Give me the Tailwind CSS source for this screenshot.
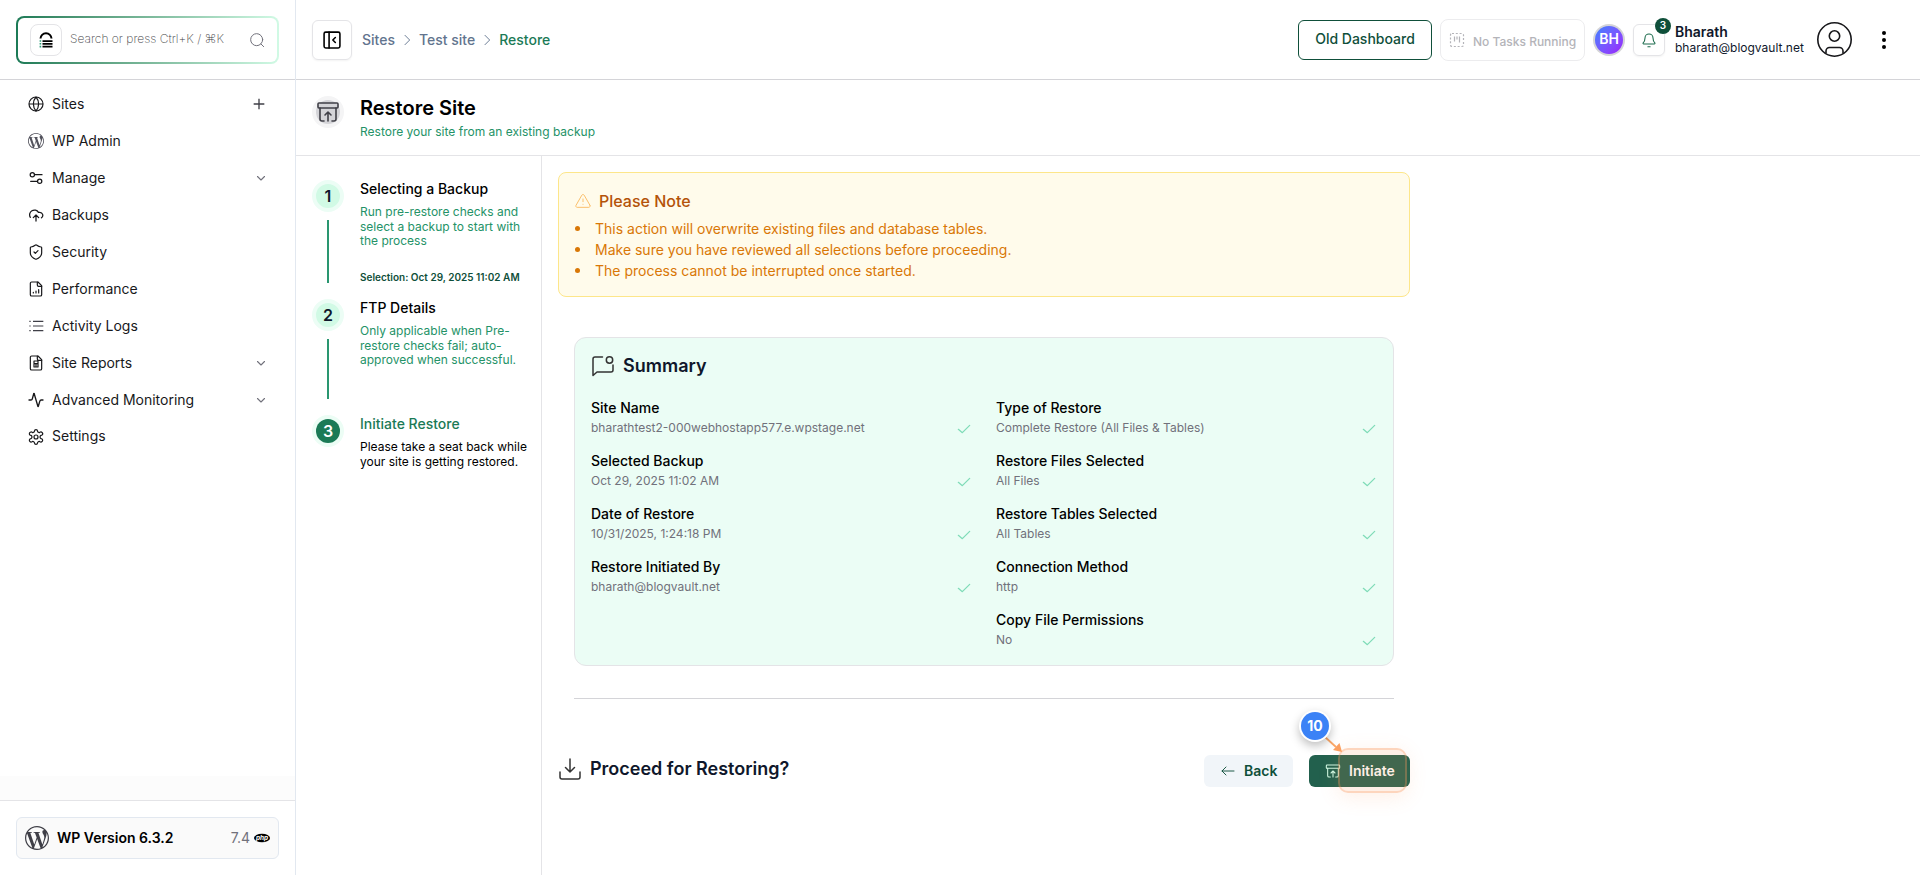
<!DOCTYPE html>
<html lang="en">
<head>
<meta charset="utf-8">
<title>Restore Site</title>
<script src="https://cdn.jsdelivr.net/npm/@tailwindcss/browser@4"></script>
</head>
<body class="bg-white">
<svg class="hidden">
  <defs>
    <symbol id="check" viewBox="0 0 24 24"><path d="M20.500 6.500 9.500 17.500l-6-5" fill="none" stroke="currentColor" stroke-width="1.900" stroke-linecap="round" stroke-linejoin="round"/></symbol>
    <symbol id="down" viewBox="0 0 24 24"><path d="m5 9 7 7 7-7" fill="none" stroke="currentColor" stroke-width="2.200" stroke-linecap="round" stroke-linejoin="round"/></symbol>
    <symbol id="right" viewBox="0 0 24 24"><path d="m9 19 7-7-7-7" fill="none" stroke="currentColor" stroke-width="1.400" stroke-linecap="round" stroke-linejoin="round"/></symbol>
    <symbol id="archive" viewBox="0 0 24 24"><g fill="none" stroke="currentColor" stroke-width="1.6" stroke-linecap="round" stroke-linejoin="round"><rect width="20" height="5" x="2" y="3" rx="1"/><path d="M4 8v11a2 2 0 0 0 2 2h2M20 8v11a2 2 0 0 1-2 2h-2M9 15l3-3 3 3M12 12v9"/></g></symbol>
    <symbol id="wp" viewBox="0 0 24 24"><path fill="currentColor" d="M21.469 6.825c.84 1.537 1.318 3.3 1.318 5.175 0 3.979-2.156 7.456-5.363 9.325l3.295-9.527c.615-1.54.82-2.771.82-3.864 0-.405-.026-.78-.07-1.11m-7.981.105c.647-.03 1.232-.105 1.232-.105.582-.075.514-.93-.067-.899 0 0-1.755.135-2.88.135-1.064 0-2.85-.15-2.85-.15-.585-.03-.661.855-.075.885 0 0 .54.061 1.125.09l1.68 4.605-2.37 7.08L5.354 6.9c.649-.03 1.234-.1 1.234-.1.585-.075.516-.93-.065-.896 0 0-1.746.138-2.874.138-.2 0-.438-.008-.69-.015C4.911 3.15 8.235 1.215 12 1.215c2.809 0 5.365 1.072 7.286 2.833-.046-.003-.091-.009-.141-.009-1.06 0-1.812.923-1.812 1.914 0 .89.513 1.643 1.06 2.531.411.72.89 1.643.89 2.977 0 .915-.354 1.994-.821 3.479l-1.075 3.585-3.9-11.61.001.014zM12 22.784c-1.059 0-2.081-.153-3.048-.437l3.237-9.406 3.315 9.087c.024.053.05.101.078.149-1.12.393-2.325.609-3.582.609M1.211 12c0-1.564.336-3.05.935-4.39L7.29 21.709C3.694 19.96 1.212 16.271 1.211 12M12 0C5.385 0 0 5.385 0 12s5.385 12 12 12 12-5.385 12-12S18.615 0 12 0"/></symbol>
  </defs>
</svg>
<div class="flex h-[875px] w-[1920px] overflow-hidden font-['Inter',sans-serif] text-black">

  <!-- Sidebar -->
  <aside class="flex w-[296px] shrink-0 flex-col border-r border-slate-200">
    <div class="flex h-20 shrink-0 items-center border-b border-zinc-300 pl-4">
      <div class="h-12 w-[263px] rounded-lg bg-linear-to-r from-[#1b7a56] to-[#d1fae5] p-0.5">
        <div class="flex h-full items-center rounded-md bg-white pl-3 pr-3">
          <div class="flex size-8 items-center justify-center rounded-lg border border-zinc-200">
            <svg class="size-4" viewBox="0 0 16 16"><path d="M2.5 6.600a5.500 5.300 0 0 1 11 0" fill="none" stroke="#000" stroke-width="2"/><path d="M4.500 8.200h10v1.800h-10zM4.500 11h10v1.800h-10zM4.500 13.800h10v1.800h-10z"/><path d="M1.600 8.200h1.600v1.600H1.600zM1.600 11h1.600v1.600H1.600zM1.600 13.800h1.600v1.600H1.600z" fill="#2a9d78"/></svg>
          </div>
          <span class="-mt-0.5 ml-2 flex-1 whitespace-nowrap text-xs font-extralight text-zinc-700">Search or press Ctrl+K / ⌘K</span>
          <svg class="size-4 text-zinc-500" viewBox="0 0 24 24" fill="none" stroke="currentColor" stroke-width="1.500" stroke-linecap="round"><circle cx="11.500" cy="11.500" r="9"/><path d="m22 22-4-4"/></svg>
        </div>
      </div>
    </div>
    <nav class="flex flex-1 flex-col pl-7 pr-7 pt-[5px] text-sm text-zinc-900">
      <a class="flex h-[37px] items-center gap-2"><svg class="size-4" viewBox="0 0 24 24" fill="none" stroke="currentColor" stroke-width="1.8"><circle cx="12" cy="12" r="10.5"/><path d="M12 1.500a16 16 0 0 0 0 21 16 16 0 0 0 0-21M1.500 12h21"/></svg><span class="flex-1">Sites</span><svg class="size-4 text-zinc-700" viewBox="0 0 24 24" fill="none" stroke="currentColor" stroke-width="2"><path d="M4 12h16M12 4v16"/></svg></a>
      <a class="flex h-[37px] items-center gap-2"><svg class="size-4 text-zinc-600"><use href="#wp"/></svg><span class="flex-1">WP Admin</span></a>
      <a class="flex h-[37px] items-center gap-2"><svg class="size-4" viewBox="0 0 24 24" fill="none" stroke="currentColor" stroke-width="1.9" stroke-linecap="round"><path d="M21 7H10M14 17H4"/><circle cx="17.500" cy="17" r="3.200"/><circle cx="6.500" cy="7" r="3.200"/></svg><span class="flex-1">Manage</span><svg class="size-3 text-zinc-500"><use href="#down"/></svg></a>
      <a class="flex h-[37px] items-center gap-2"><svg class="size-4" viewBox="0 0 24 24" fill="none" stroke="currentColor" stroke-width="1.900" stroke-linecap="round" stroke-linejoin="round"><path d="M3.500 15.500A7 7 0 1 1 15.700 8h1.800a4.500 4.500 0 0 1 2.700 8.200M12 12v9M8 16l4-4 4 4"/></svg><span class="flex-1">Backups</span></a>
      <a class="flex h-[37px] items-center gap-2"><svg class="size-4" viewBox="0 0 24 24" fill="none" stroke="currentColor" stroke-width="1.800" stroke-linecap="round" stroke-linejoin="round"><path d="M20.500 13c0 5.500-3.500 8-8.200 9.800a1 1 0 0 1-.7 0C7 21 3.500 18.500 3.500 13V5.500a1 1 0 0 1 1-1c2.200 0 4.800-1.300 6.700-2.900a1.200 1.200 0 0 1 1.600 0c1.900 1.600 4.500 2.900 6.700 2.900a1 1 0 0 1 1 1z"/><path d="m9 12 2 2 4-4"/></svg><span class="flex-1">Security</span></a>
      <a class="flex h-[37px] items-center gap-2"><svg class="size-4" viewBox="0 0 24 24" fill="none" stroke="currentColor" stroke-width="1.800" stroke-linecap="round" stroke-linejoin="round"><path d="M15 1.500H5.500a2 2 0 0 0-2 2v17a2 2 0 0 0 2 2h13a2 2 0 0 0 2-2V7z"/><path d="M14 1.500V6a2 2 0 0 0 2 2h4.500M8 18v-1M12 18v-3M16 18v-5"/></svg><span class="flex-1">Performance</span></a>
      <a class="flex h-[37px] items-center gap-2"><svg class="size-4 text-zinc-700" viewBox="0 0 24 24" fill="none" stroke="currentColor" stroke-width="1.800"><path d="M7.500 5H23M7.500 12H23M7.500 19H23M2 5h2M2 12h2M2 19h2"/></svg><span class="flex-1">Activity Logs</span></a>
      <a class="flex h-[37px] items-center gap-2"><svg class="size-4" viewBox="0 0 24 24" fill="none" stroke="currentColor" stroke-width="1.800" stroke-linecap="round" stroke-linejoin="round"><path d="M15 1.500H5.500a2 2 0 0 0-2 2v17a2 2 0 0 0 2 2h13a2 2 0 0 0 2-2V7z"/><path d="M14 1.500V6a2 2 0 0 0 2 2h4.500M9 13v5h6v-5zM9 9.500v3M15 9v4M9 9h5M12 13v5"/></svg><span class="flex-1">Site Reports</span><svg class="size-3 text-zinc-500"><use href="#down"/></svg></a>
      <a class="flex h-[37px] items-center gap-2"><svg class="size-4" viewBox="0 0 24 24" fill="none" stroke="currentColor" stroke-width="2" stroke-linecap="round" stroke-linejoin="round"><path d="M22.500 12h-2.800a2 2 0 0 0-1.900 1.500l-2.400 8.300a.25.25 0 0 1-.5 0L9.200 2.200a.25.25 0 0 0-.5 0l-2.300 8.300A2 2 0 0 1 4.500 12H1.500"/></svg><span class="flex-1">Advanced Monitoring</span><svg class="size-3 text-zinc-500"><use href="#down"/></svg></a>
      <a class="flex h-[37px] items-center gap-2"><svg class="size-4" viewBox="0 0 24 24" fill="none" stroke="currentColor" stroke-width="1.800" stroke-linejoin="round"><path d="M9.670 3.140a2.340 2.340 0 0 1 4.660 0 2.340 2.340 0 0 0 3.320 1.910 2.340 2.340 0 0 1 3.330 4.040 2.340 2.340 0 0 0 0 5.830 2.340 2.340 0 0 1-3.330 4.030 2.340 2.340 0 0 0-3.320 1.920 2.340 2.340 0 0 1-4.660 0 2.340 2.340 0 0 0-3.320-1.920 2.340 2.340 0 0 1-3.330-4.030 2.340 2.340 0 0 0 0-5.830A2.340 2.340 0 0 1 6.350 5.050a2.340 2.340 0 0 0 3.320-1.910"/><circle cx="12" cy="12" r="3"/></svg><span class="-mt-px flex-1">Settings</span></a>
    </nav>
    <div class="h-6 shrink-0 bg-[#fcfcfc]"></div>
    <div class="h-[75px] shrink-0 border-t border-zinc-200 pl-4 pt-4">
      <div class="flex h-[42px] w-[263px] items-center rounded-md border border-slate-200 bg-zinc-50 pl-2 pr-2">
        <svg class="size-6 text-zinc-700"><use href="#wp"/></svg>
        <span class="ml-2 flex-1 text-sm font-semibold">WP Version 6.3.2</span>
        <span class="text-sm text-zinc-500">7.4</span>
        <svg class="ml-1 h-4 w-4" viewBox="0 0 16 16"><ellipse cx="8" cy="8" rx="8" ry="4.300"/><text x="8" y="9.800" text-anchor="middle" font-size="6.500" font-weight="700" font-style="italic" fill="#fff">php</text></svg>
      </div>
    </div>
  </aside>

  <div class="flex flex-1 flex-col">
    <!-- Top bar -->
    <header class="flex h-20 shrink-0 items-center border-b border-zinc-300 pl-4 pr-[30px]">
      <div class="flex size-10 items-center justify-center rounded-md border border-zinc-200 shadow-xs">
        <svg class="size-5" viewBox="0 0 24 24" fill="none" stroke="currentColor" stroke-width="1.900" stroke-linecap="round" stroke-linejoin="round"><rect width="19" height="19" x="2.500" y="2.500" rx="2"/><path d="M8.500 2.500v19M16 15l-3-3 3-3"/></svg>
      </div>
      <div class="ml-2.5 flex items-center text-sm font-medium text-slate-500">
        <span>Sites</span><svg class="mx-1 size-4"><use href="#right"/></svg><span>Test site</span><svg class="mx-1 size-4"><use href="#right"/></svg><span class="text-[#1b7a56]">Restore</span>
      </div>
      <div class="ml-auto flex items-center">
        <div class="flex h-10 w-[134px] items-center justify-center rounded-md border border-[#0f4f3a] pb-0.5 text-sm font-medium text-[#0f4f3a]">Old Dashboard</div>
        <div class="ml-2 flex h-[42px] w-[145px] items-center rounded-lg border border-zinc-200/70 pl-2 text-[#b4b4b9]">
          <svg class="size-4 shrink-0" viewBox="0 0 16 16" fill="none" stroke="currentColor" stroke-width="1.200"><rect x="1.500" y="1.500" width="13" height="13" rx="1.500" stroke-dasharray="2 1.800"/><path d="M5.500 4.500v5M8 4.500v3M10.500 4.500v6"/></svg>
          <span class="ml-2 mt-1 whitespace-nowrap text-xs font-medium">No Tasks Running</span>
        </div>
        <div class="ml-2 flex size-8 items-center justify-center rounded-full bg-zinc-300 p-0.5"><div class="flex size-7 items-center justify-center rounded-full bg-linear-to-br from-blue-500 to-purple-600 pb-0.5 text-sm font-semibold text-white">BH</div></div>
        <div class="relative ml-2 flex size-8 items-center justify-center rounded-md border border-zinc-200 shadow-xs">
          <svg class="size-4 text-[#1b6b4c]" viewBox="0 0 24 24" fill="none" stroke="currentColor" stroke-width="1.600" stroke-linecap="round" stroke-linejoin="round"><path d="M10.300 22h3.400M3.300 16.300A1 1 0 0 0 4 18h16a1 1 0 0 0 .7-1.700C19.400 15 18 13.500 18 9A6 6 0 0 0 6 9c0 4.500-1.400 6-2.700 7.300"/></svg>
          <span class="absolute -right-[7px] -top-[7px] flex size-4 items-center justify-center rounded-full bg-[#0f4f3a] text-[10px] font-semibold text-white">3</span>
        </div>
        <div class="ml-2.5 w-[130px] text-slate-900">
          <div class="text-sm/[16px] font-semibold">Bharath</div>
          <div class="text-xs/[16px]">bharath@blogvault.net</div>
        </div>
        <svg class="ml-3 size-[35px]" viewBox="0 0 35 35" fill="none" stroke="#18181b" stroke-width="1.600"><circle cx="17.500" cy="17.500" r="16.700"/><circle cx="17.500" cy="14" r="5.200"/><path d="M9 31.500V29a3.500 3.500 0 0 1 3.500-3.500h10A3.500 3.500 0 0 1 26 29v2.500"/></svg>
        <svg class="ml-[26px] h-5 w-3" viewBox="0 0 12 20"><circle cx="6" cy="3" r="2"/><circle cx="6" cy="10" r="2"/><circle cx="6" cy="17" r="2"/></svg>
      </div>
    </header>

    <!-- Page heading -->
    <section class="flex h-[76px] shrink-0 border-b border-zinc-200 pl-4 pt-4">
      <div class="flex size-8 items-center justify-center rounded-full bg-zinc-100"><div class="flex size-6 items-center justify-center rounded-full bg-zinc-300"><svg class="size-6 shrink-0 text-zinc-700"><use href="#archive"/></svg></div></div>
      <div class="ml-4 -mt-0.5">
        <h1 class="text-xl/[28px] font-semibold">Restore Site</h1>
        <p class="mt-0.5 text-xs/[16px] text-[#249267]">Restore your site from an existing backup</p>
      </div>
    </section>

    <div class="flex flex-1">
      <!-- Steps -->
      <section class="w-[246px] shrink-0 border-r border-zinc-200 pl-4 pt-6">
        <div class="flex h-[119px] gap-4">
          <div class="flex flex-col items-center">
            <div class="flex size-8 items-center justify-center rounded-full border-4 border-emerald-50 bg-[#d1fae5] text-base font-semibold text-slate-900">1</div>
            <div class="mt-2 h-[63px] w-0.5 bg-[#2a9670]"></div>
          </div>
          <div class="w-[172px] text-xs/[14.5px] text-[#249267]">
            <div class="text-sm/[17px] font-medium text-black">Selecting a Backup</div>
            <p class="mt-2">Run pre-restore checks and<br>select a backup to start with<br>the process</p>
            <p class="mt-[21px] whitespace-nowrap text-[10px] font-semibold text-[#0f4f3a]">Selection: Oct 29, 2025 11:02 AM</p>
          </div>
        </div>
        <div class="flex h-[116px] gap-4">
          <div class="flex flex-col items-center">
            <div class="flex size-8 items-center justify-center rounded-full border-4 border-emerald-50 bg-[#d1fae5] text-base font-semibold text-slate-900">2</div>
            <div class="mt-2 h-[60px] w-0.5 bg-[#2a9670]"></div>
          </div>
          <div class="w-[172px] text-xs/[14.5px] text-[#249267]">
            <div class="text-sm/[17px] font-medium text-black">FTP Details</div>
            <p class="mt-2">Only applicable when Pre-<br>restore checks fail; auto-<br>approved when successful.</p>
          </div>
        </div>
        <div class="flex gap-4">
          <div class="flex size-8 items-center justify-center rounded-full bg-emerald-50"><div class="flex size-6 items-center justify-center rounded-full bg-[#1b7a56] text-base font-semibold text-white">3</div></div>
          <div class="w-[172px] text-xs/[14.5px]">
            <div class="text-sm/[17px] font-medium text-[#1b7a56]">Initiate Restore</div>
            <p class="mt-2 whitespace-nowrap">Please take a seat back while<br>your site is getting restored.</p>
          </div>
        </div>
      </section>

      <!-- Review -->
      <main class="w-[868px] pl-4 pt-4">
        <div class="h-[125px] rounded-lg border border-[#fde68a] bg-[#fffbeb] px-4 pt-4">
          <div class="flex h-6 items-center gap-2">
            <svg class="size-4 text-[#fbbf6b]" viewBox="0 0 24 24" fill="none" stroke="currentColor" stroke-width="1.500" stroke-linecap="round" stroke-linejoin="round"><path d="m22.500 18.500-8.800-15.300a2 2 0 0 0-3.400 0L1.500 18.500A2 2 0 0 0 3.200 21.500h17.600a2 2 0 0 0 1.700-3M12 9v4M12 17h.01"/></svg>
            <h2 class="text-base font-medium text-[#b45309]">Please Note</h2>
          </div>
          <ul class="mt-[5px] text-sm/[21px] text-[#d97706]">
            <li class="flex items-center gap-[15px]"><i class="size-[5px] rounded-full bg-[#d97706]"></i>This action will overwrite existing files and database tables.</li>
            <li class="flex items-center gap-[15px]"><i class="size-[5px] rounded-full bg-[#d97706]"></i>Make sure you have reviewed all selections before proceeding.</li>
            <li class="flex items-center gap-[15px]"><i class="size-[5px] rounded-full bg-[#d97706]"></i>The process cannot be interrupted once started.</li>
          </ul>
        </div>

        <div class="mx-4 mt-10 h-[329px] rounded-xl border border-zinc-200 bg-[#ebfdf5] px-4 pt-4">
          <div class="flex h-6 items-center gap-2">
            <svg class="size-6" viewBox="0 0 24 24" fill="none" stroke="#333" stroke-width="1.500" stroke-linecap="round" stroke-linejoin="round"><path d="M11.500 3H4a2 2 0 0 0-2 2v16.500L6 18h14a2 2 0 0 0 2-2v-5"/><circle cx="18.500" cy="6" r="3.200"/></svg>
            <h2 class="text-lg font-semibold text-slate-900">Summary</h2>
          </div>
          <div class="mt-5 grid grid-cols-2 gap-x-6 text-sm/[20px]">
            <div>
              <div class="flex h-[53px] items-start"><div class="flex-1"><div class="font-medium">Site Name</div><div class="text-xs/[20px] text-zinc-500">bharathtest2-000webhostapp577.e.wpstage.net</div></div><svg class="mt-[22.5px] size-4 text-[#7fdcb8]"><use href="#check"/></svg></div>
              <div class="flex h-[53px] items-start"><div class="flex-1"><div class="font-medium">Selected Backup</div><div class="text-xs/[20px] text-zinc-500">Oct 29, 2025 11:02 AM</div></div><svg class="mt-[22.5px] size-4 text-[#7fdcb8]"><use href="#check"/></svg></div>
              <div class="flex h-[53px] items-start"><div class="flex-1"><div class="font-medium">Date of Restore</div><div class="text-xs/[20px] text-zinc-500">10/31/2025, 1:24:18 PM</div></div><svg class="mt-[22.5px] size-4 text-[#7fdcb8]"><use href="#check"/></svg></div>
              <div class="flex h-[53px] items-start"><div class="flex-1"><div class="font-medium">Restore Initiated By</div><div class="text-xs/[20px] text-zinc-500">bharath@blogvault.net</div></div><svg class="mt-[22.5px] size-4 text-[#7fdcb8]"><use href="#check"/></svg></div>
            </div>
            <div>
              <div class="flex h-[53px] items-start"><div class="flex-1"><div class="font-medium">Type of Restore</div><div class="text-xs/[20px] text-zinc-500">Complete Restore (All Files &amp; Tables)</div></div><svg class="mt-[22.5px] size-4 text-[#7fdcb8]"><use href="#check"/></svg></div>
              <div class="flex h-[53px] items-start"><div class="flex-1"><div class="font-medium">Restore Files Selected</div><div class="text-xs/[20px] text-zinc-500">All Files</div></div><svg class="mt-[22.5px] size-4 text-[#7fdcb8]"><use href="#check"/></svg></div>
              <div class="flex h-[53px] items-start"><div class="flex-1"><div class="font-medium">Restore Tables Selected</div><div class="text-xs/[20px] text-zinc-500">All Tables</div></div><svg class="mt-[22.5px] size-4 text-[#7fdcb8]"><use href="#check"/></svg></div>
              <div class="flex h-[53px] items-start"><div class="flex-1"><div class="font-medium">Connection Method</div><div class="text-xs/[20px] text-zinc-500">http</div></div><svg class="mt-[22.5px] size-4 text-[#7fdcb8]"><use href="#check"/></svg></div>
              <div class="flex h-[53px] items-start"><div class="flex-1"><div class="font-medium">Copy File Permissions</div><div class="text-xs/[20px] text-zinc-500">No</div></div><svg class="mt-[22.5px] size-4 text-[#7fdcb8]"><use href="#check"/></svg></div>
            </div>
          </div>
        </div>
        <div class="mx-4 mt-8 h-px bg-zinc-300"></div>

        <div class="mt-14 flex items-start">
          <svg class="mt-0.5 size-6" viewBox="0 0 24 24" fill="none" stroke="#333" stroke-width="1.500" stroke-linecap="round" stroke-linejoin="round"><path d="M12 2v13M7.500 10.500 12 15l4.500-4.500M2 15v5a2 2 0 0 0 2 2h16a2 2 0 0 0 2-2v-5"/></svg>
          <h2 class="ml-2 flex-1 text-lg/[28px] font-semibold text-slate-900">Proceed for Restoring?</h2>
          <div class="flex h-8 w-[89px] items-center rounded-md bg-slate-100 pl-4 text-sm font-semibold text-[#0f4f3a]">
            <svg class="mr-2 size-4" viewBox="0 0 24 24" fill="none" stroke="currentColor" stroke-width="1.400" stroke-linecap="round" stroke-linejoin="round"><path d="M9 6 3 12l6 6M3 12h18"/></svg>Back
          </div>
          <div class="relative ml-4 flex h-8 w-[101px] items-center rounded-md bg-[#22604d] pl-4 text-sm font-semibold text-white">
            <svg class="mr-2 size-4 text-emerald-100"><use href="#archive"/></svg>Initiate
            <div class="absolute -top-[7px] left-[29px] h-[45px] w-[69px] rounded-[10px] border-2 border-[#f9965a]/40 bg-[#f9965a]/15 bg-clip-padding shadow-[0_4px_20px_rgba(249,150,90,0.15)]"></div>
            <svg class="absolute -top-[19px] left-4 size-5 overflow-visible" viewBox="0 0 20 20"><path d="M0 1 11 11" stroke="#fba868" stroke-width="1.800"/><path d="m17 16-9-2 6.500-7z" fill="#fb9f60"/></svg>
            <div class="absolute -top-[45px] -left-[10px] flex size-8 items-center justify-center rounded-full bg-white shadow-[0_4px_10px_rgba(0,0,0,0.25)]"><div class="flex size-7 items-center justify-center rounded-full bg-[#3b82f6] text-sm font-bold">10</div></div>
          </div>
        </div>
      </main>
    </div>
  </div>
</div>
</body>
</html>
